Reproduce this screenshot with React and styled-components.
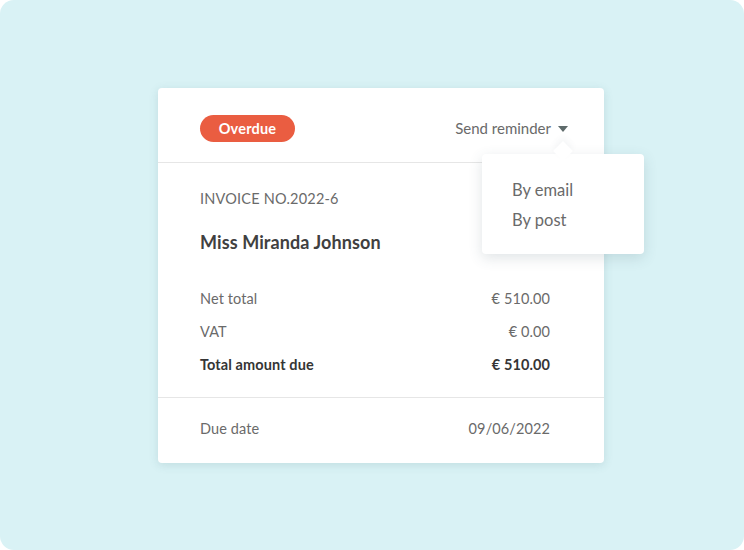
import styled, { createGlobalStyle } from "styled-components";

const GlobalStyle = createGlobalStyle`
  html, body {
    margin: 0;
    padding: 0;
    background: #ffffff;
  }
  body {
    font-family: Lato, "Open Sans", sans-serif;
  }
`;

const rows = [
  { label: "Net total", value: "€ 510.00" },
  { label: "VAT", value: "€ 0.00" },
  { label: "Total amount due", value: "€ 510.00", strong: true },
];

const App = () => {
  return (
    <>
      <GlobalStyle />
      <Stage>
        <Card>
          <Header>
            <Badge>Overdue</Badge>
            <ReminderToggle>
              Send reminder
              <Caret />
            </ReminderToggle>
          </Header>

          <Body>
            <InvoiceNo>INVOICE NO.2022-6</InvoiceNo>
            <Customer>Miss Miranda Johnson</Customer>
            <Totals>
              {rows.map((row) => (
                <Row key={row.label} $strong={row.strong}>
                  <span>{row.label}</span>
                  <span>{row.value}</span>
                </Row>
              ))}
            </Totals>
          </Body>

          <Footer>
            <Row>
              <span>Due date</span>
              <span>09/06/2022</span>
            </Row>
          </Footer>

          {/* Reminder menu sits over the card */}
          <Menu>
            <MenuItem>By email</MenuItem>
            <MenuItem>By post</MenuItem>
          </Menu>
        </Card>
      </Stage>
    </>
  );
};

const Stage = styled.div`
  width: 744px;
  height: 550px;
  box-sizing: border-box;
  background: #d9f2f5;
  border-radius: 14px;
  display: flex;
  align-items: center;
  padding-left: 158px;
`;

const Card = styled.div`
  position: relative;
  width: 446px;
  height: 375px;
  box-sizing: border-box;
  background: #ffffff;
  border-radius: 4px;
  box-shadow: 0 2px 10px rgba(60, 110, 120, 0.16);
  display: flex;
  flex-direction: column;
`;

const Header = styled.div`
  height: 75px;
  box-sizing: border-box;
  padding: 7px 36px 0 42px;
  display: flex;
  align-items: center;
  justify-content: space-between;
  border-bottom: 1px solid #e6e6e6;
`;

const Badge = styled.span`
  display: inline-flex;
  align-items: center;
  justify-content: center;
  width: 95px;
  height: 27px;
  border-radius: 14px;
  background: #ea5d41;
  color: #ffffff;
  font-size: 14.5px;
  font-weight: 700;
  letter-spacing: 0.2px;
`;

const ReminderToggle = styled.div`
  display: flex;
  align-items: center;
  gap: 7px;
  color: #6a6a6a;
  font-size: 15px;
`;

const Caret = styled.span`
  width: 0;
  height: 0;
  border-left: 5px solid transparent;
  border-right: 5px solid transparent;
  border-top: 6px solid #5e6b6b;
  margin-top: 1px;
`;

const Body = styled.div`
  padding: 26px 54px 0 42px;
  flex: 1;
  border-bottom: 1px solid #e6e6e6;
`;

const InvoiceNo = styled.div`
  font-size: 14.5px;
  color: #6a6a6a;
  letter-spacing: 0.2px;
  line-height: 20px;
`;

const Customer = styled.div`
  margin-top: 23px;
  font-size: 18px;
  font-weight: 700;
  color: #404040;
  line-height: 20px;
  letter-spacing: 0.1px;
`;

const Totals = styled.div`
  margin-top: 37px;
  display: flex;
  flex-direction: column;
  gap: 13px;
`;

const Row = styled.div`
  display: flex;
  justify-content: space-between;
  font-size: 14.5px;
  line-height: 20px;
  letter-spacing: 0.1px;
  color: ${(p) => (p.$strong ? "#353535" : "#6a6a6a")};
  font-weight: ${(p) => (p.$strong ? 700 : 400)};
`;

const Footer = styled.div`
  height: 65px;
  box-sizing: border-box;
  padding: 0 54px 2px 42px;
  display: flex;
  flex-direction: column;
  justify-content: center;
`;

const Menu = styled.div`
  position: absolute;
  left: 324px;
  top: 66px;
  width: 162px;
  height: 100px;
  box-sizing: border-box;
  padding: 26px 30px;
  background: #ffffff;
  border-radius: 4px;
  box-shadow: 0 4px 14px rgba(60, 90, 100, 0.16);
  display: flex;
  flex-direction: column;
  gap: 10px;

  &::before {
    content: "";
    position: absolute;
    top: -10px;
    left: 74px;
    width: 14px;
    height: 14px;
    background: #ffffff;
    transform: rotate(45deg);
    box-shadow: -3px -3px 6px rgba(60, 90, 100, 0.06);
  }
`;

const MenuItem = styled.div`
  position: relative;
  font-size: 16.5px;
  line-height: 20px;
  color: #6a6a6a;
`;

export default App;
